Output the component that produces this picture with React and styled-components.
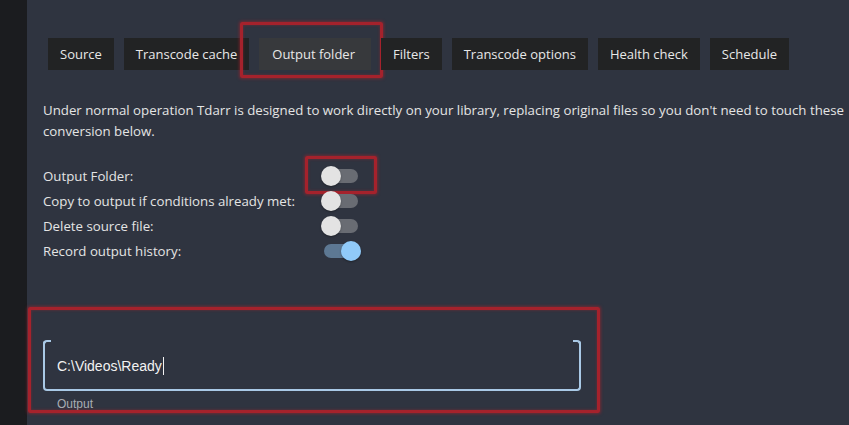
import React from 'react'
import styled, { createGlobalStyle } from 'styled-components'

const GlobalStyle = createGlobalStyle`
  html, body {
    margin: 0;
    padding: 0;
    background: #2f3440;
    overflow: hidden;
  }
  body {
    font-family: 'Open Sans', 'Noto Sans', sans-serif;
    color: #e4e4e4;
  }
`

const tabs = ['Source', 'Transcode cache', 'Output folder', 'Filters', 'Transcode options', 'Health check', 'Schedule']

const toggles = [
  { label: 'Output Folder:', on: false, marked: true },
  { label: 'Copy to output if conditions already met:', on: false },
  { label: 'Delete source file:', on: false },
  { label: 'Record output history:', on: true },
]

const App = () => {
  return (
    <>
      <GlobalStyle />
      <Page>
        <Sidebar />
        <Main>
          <TabBar>
            {tabs.map((t) => (
              <TabWrap key={t}>
                <Tab $active={t === 'Output folder'}>{t}</Tab>
                {t === 'Output folder' && <Highlight $t={-16} $r={-12} $b={-8} $l={-19} />}
              </TabWrap>
            ))}
          </TabBar>

          <Intro>
            <span>Under normal operation Tdarr is designed to work directly on your library, replacing original files so you don't need to touch these</span>
            <span>conversion below.</span>
          </Intro>

          <Options>
            {toggles.map((o) => (
              <OptionRow key={o.label}>
                <OptionLabel>{o.label}</OptionLabel>
                <SwitchRoot>
                  <Track $on={o.on} />
                  <Thumb $on={o.on} />
                  {o.marked && <Highlight $t={-7} $r={-7} $b={-6} $l={-7} />}
                </SwitchRoot>
              </OptionRow>
            ))}
          </Options>

          <FieldSection>
            <Highlight $t={-33} $r={-19} $b={-2} $l={-15} />
            <OutlinedBox>
              <InputText>C:\Videos\Ready</InputText>
              <Caret />
            </OutlinedBox>
            <HelperLabel>Output</HelperLabel>
          </FieldSection>
        </Main>
      </Page>
    </>
  )
}

export default App

const Page = styled.div`
  display: flex;
  min-height: 100vh;
`

const Sidebar = styled.aside`
  width: 27px;
  flex-shrink: 0;
  background: #1b1c1f;
`

const Main = styled.main`
  flex: 1;
  padding: 38px 0 0 16px;
  min-width: 0;
`

const TabBar = styled.div`
  display: flex;
  gap: 10px;
  margin-left: 5px;
`

const TabWrap = styled.div`
  position: relative;
`

const Tab = styled.div`
  height: 32px;
  display: flex;
  align-items: center;
  padding: ${(p) => (p.$active ? '0 16px 0 13px' : '0 12px')};
  font-size: 13px;
  white-space: nowrap;
  color: #e8e8e8;
  background: ${(p) => (p.$active ? '#37393c' : '#222324')};
`

const Highlight = styled.div`
  position: absolute;
  top: ${(p) => p.$t}px;
  right: ${(p) => p.$r}px;
  bottom: ${(p) => p.$b}px;
  left: ${(p) => p.$l}px;
  border: 3px solid #a5222c;
  border-radius: 2px;
  box-shadow: 0 0 3px 1px rgba(165, 34, 44, 0.55), inset 0 0 3px rgba(165, 34, 44, 0.55);
  pointer-events: none;
`

const Intro = styled.p`
  margin: 30px 0 0;
  font-size: 13.25px;
  line-height: 21px;
  display: flex;
  flex-direction: column;
  white-space: nowrap;
`

const Options = styled.div`
  margin-top: 21px;
  display: flex;
  flex-direction: column;
`

const OptionRow = styled.div`
  display: grid;
  grid-template-columns: 269px 58px;
  align-items: center;
  height: 25px;
  font-size: 13.25px;
`

const OptionLabel = styled.span`
  white-space: nowrap;
`

const SwitchRoot = styled.span`
  position: relative;
  width: 58px;
  height: 25px;
`

const Track = styled.span`
  position: absolute;
  left: 12px;
  top: 5.5px;
  width: 34px;
  height: 14px;
  border-radius: 7px;
  background: ${(p) => (p.$on ? '#5d7893' : '#696c73')};
`

const Thumb = styled.span`
  position: absolute;
  top: 2.5px;
  left: ${(p) => (p.$on ? 29 : 9)}px;
  width: 20px;
  height: 20px;
  border-radius: 50%;
  background: ${(p) => (p.$on ? '#90caf9' : '#e3e3e3')};
  box-shadow: 0 1px 2px rgba(0, 0, 0, 0.35);
`

const FieldSection = styled.section`
  position: relative;
  margin-top: 77px;
  width: 538px;
  font-family: 'Liberation Sans', Arial, sans-serif;
`

const OutlinedBox = styled.div`
  position: relative;
  height: 51px;
  box-sizing: border-box;
  display: flex;
  align-items: center;
  padding: 0 12px;
  border: 2px solid #a9c9e6;
  border-top-color: transparent;
  border-radius: 4px;

  &::before,
  &::after {
    content: '';
    position: absolute;
    top: -2px;
    width: 6px;
    height: 6px;
    border-top: 2px solid #a9c9e6;
  }
  &::before {
    left: -2px;
    border-left: 2px solid #a9c9e6;
    border-top-left-radius: 4px;
  }
  &::after {
    right: -2px;
    border-right: 2px solid #a9c9e6;
    border-top-right-radius: 4px;
  }
`

const InputText = styled.span`
  font-size: 14px;
  color: #f2f2f2;
`

const Caret = styled.span`
  width: 1px;
  height: 18px;
  background: #f2f2f2;
  margin-left: 1px;
`

const HelperLabel = styled.div`
  padding: 6px 0 0 14px;
  font-size: 12px;
  line-height: 14px;
  color: #a9adb3;
`
